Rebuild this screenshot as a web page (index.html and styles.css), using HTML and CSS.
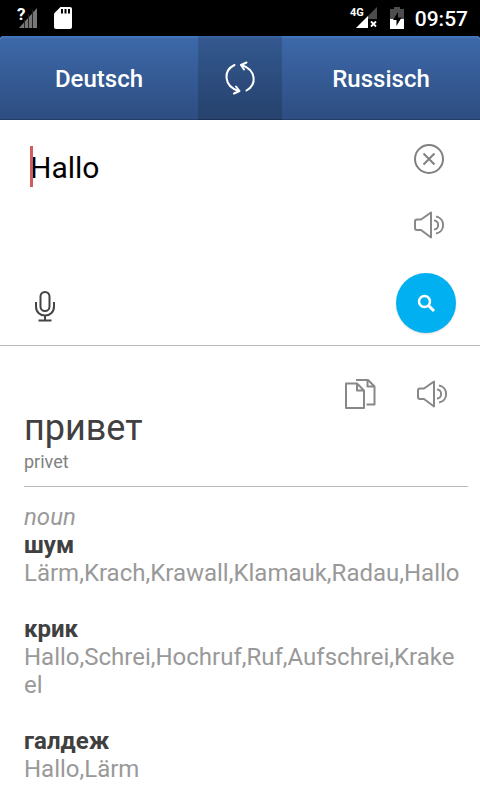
FILE: index.html
```html
<!DOCTYPE html>
<html lang="de">
  <head>
    <meta charset="UTF-8" />
    <meta name="viewport" content="width=device-width, initial-scale=1.0" />
    <title>Deutsch - Russisch</title>
    <link rel="stylesheet" href="styles.css" />
  </head>
  <body>
    <div class="status-bar">
      <div class="status-group">
        <svg class="signal-icon" width="22" height="24" viewBox="0 0 22 24">
          <path d="M2 22 L20 2 V22 Z" fill="#777" />
          <path d="M7.500 10 V22 M11.500 8 V22 M15.500 4 V22" stroke="#222" stroke-width="1" />
          <path d="M0 0 H8 V14 H0 Z" fill="#000" />
          <text class="signal-unknown" x="0" y="14">?</text>
        </svg>
        <svg width="18" height="22" viewBox="0 0 18 22">
          <path d="M6.500 0 H16 Q18 0 18 2 V20 Q18 22 16 22 H2 Q0 22 0 20 V6.500 Z" fill="#fff" />
          <path d="M8 2 V6.500 M11.500 2 V6.500 M15 2 V6.500" stroke="#000" stroke-width="2" />
        </svg>
      </div>
      <div class="status-group">
        <svg width="28" height="24" viewBox="0 0 28 24">
          <path d="M6 22 L27 1 V22 Z" fill="#4d4d4d" />
          <path d="M6 22 L18 10 V22 Z" fill="#fff" />
          <path d="M18 13 H28 V24 H18 Z" fill="#000" />
          <path d="M21 15.500 L26 20.500 M26 15.500 L21 20.500" stroke="#fff" stroke-width="1.800" />
          <text class="signal-type" x="0" y="10">4G</text>
        </svg>
        <svg class="battery-icon" width="14" height="22" viewBox="0 0 14 22">
          <path d="M4 0 H10 V2 H14 V22 H0 V2 H4 Z" fill="#4d4d4d" />
          <path d="M0 12 H14 V22 H0 Z" fill="#fff" />
          <path d="M8 5 L3 13 H6.500 V19 L11.500 10.500 H8 Z" fill="#000" />
        </svg>
        <span class="clock">09:57</span>
      </div>
    </div>

    <header class="lang-bar">
      <button class="lang-btn">Deutsch</button>
      <button class="swap-btn" aria-label="Sprachen tauschen">
        <svg width="32" height="34" viewBox="0 0 32 34" fill="none" stroke="#fff" stroke-width="2" stroke-linecap="round" stroke-linejoin="round">
          <path d="M10.500 4 C-1 9.500 -0.500 25 14.500 30" />
          <path d="M12 25.500 L15.500 30 L10 32.500" />
          <path d="M22.500 29.500 C33 23.500 32.500 9 17.500 4" />
          <path d="M22.500 1.500 L17 4 L20 8.500" />
        </svg>
      </button>
      <button class="lang-btn">Russisch</button>
    </header>

    <section class="input-panel">
      <div class="input-main">
        <span class="caret"></span>
        <textarea class="source-text" aria-label="Text eingeben" spellcheck="false">Hallo</textarea>
        <button class="icon-btn mic-btn" aria-label="Spracheingabe">
          <svg width="22" height="32" viewBox="0 0 22 32" fill="none" stroke="#444" stroke-width="2">
            <rect x="6.500" y="2" width="9" height="19" rx="4.500" />
            <path d="M2 12 V16.500 C2 28.500 20 28.500 20 16.500 V12 M11 26 V30 M4.500 30.500 H17.500" />
          </svg>
        </button>
      </div>
      <div class="input-tools">
        <button class="icon-btn" aria-label="Löschen">
          <svg width="32" height="32" viewBox="0 0 32 32" fill="none" stroke="#808080" stroke-width="2">
            <circle cx="16" cy="16" r="14" />
            <path d="M10.500 10.500 L21.500 21.500 M21.500 10.500 L10.500 21.500" />
          </svg>
        </button>
        <button class="icon-btn" aria-label="Eingabe vorlesen">
          <svg width="32" height="32" viewBox="0 0 32 32" fill="none" stroke="#888" stroke-width="2" stroke-linejoin="round">
            <path d="M8 11.500 H4 Q2 11.500 2 13.500 V20 Q2 22 4 22 H8 L18 29.500 V4.500 Z" />
            <path d="M21 12.500 C26.500 12.500 26.500 21.500 21 21.500 M23 8.500 C32.500 10 32.500 24 23 25.500" />
          </svg>
        </button>
        <button class="search-btn" aria-label="Übersetzen">
          <svg width="18" height="18" viewBox="0 0 18 18" fill="none" stroke="#fff" stroke-width="2.500">
            <circle cx="7.500" cy="7.500" r="5.500" />
            <path d="M11.500 11.500 L17 17" stroke-width="3" />
          </svg>
        </button>
      </div>
    </section>

    <main class="result">
      <div class="result-tools">
        <button class="icon-btn" aria-label="Kopieren">
          <svg width="32" height="32" viewBox="0 0 32 32" fill="none" stroke="#888" stroke-width="2" stroke-linejoin="round">
            <path d="M2 5.500 H13 L20 12.500 V30 H2 Z M13 5.500 V12.500 H20" />
            <path d="M12 2 H24 L30.500 8.500 V26.500 H22.500 M23.500 2 V8.500 H30.500" />
          </svg>
        </button>
        <button class="icon-btn" aria-label="Übersetzung vorlesen">
          <svg width="32" height="32" viewBox="0 0 32 32" fill="none" stroke="#888" stroke-width="2" stroke-linejoin="round">
            <path d="M8 10.500 H4 Q2 10.500 2 12.500 V19 Q2 21 4 21 H8 L18 28.500 V3.500 Z" />
            <path d="M21 11.500 C26.500 11.500 26.500 20.500 21 20.500 M23 7.500 C32.500 9 32.500 23 23 24.500" />
          </svg>
        </button>
      </div>
      <div class="translation">
        <h1 class="word" lang="ru">привет</h1>
        <p class="translit">privet</p>
      </div>
      <div class="entries">
        <p class="word-class">noun</p>
        <div class="entry">
          <h2 class="term" lang="ru">шум</h2>
          <p class="synonyms">Lärm,Krach,Krawall,Klamauk,Radau,Hallo</p>
        </div>
        <div class="entry">
          <h2 class="term" lang="ru">крик</h2>
          <p class="synonyms">Hallo,Schrei,Hochruf,Ruf,Aufschrei,Krakeel</p>
        </div>
        <div class="entry">
          <h2 class="term" lang="ru">галдеж</h2>
          <p class="synonyms">Hallo,Lärm</p>
        </div>
      </div>
    </main>
  </body>
</html>
```
FILE: styles.css
```css
* {
  margin: 0;
  padding: 0;
  box-sizing: border-box;
}

body {
  font-family: Roboto, "Noto Sans", sans-serif;
  background: #fff;
  color: #404040;
}

svg {
  display: block;
  overflow: visible;
}

button {
  border: none;
  background: none;
  font-family: inherit;
  cursor: pointer;
}

.status-bar {
  display: flex;
  justify-content: space-between;
  align-items: center;
  height: 36px;
  padding: 0 12px 0 17px;
  background: #000;
}

.status-group {
  display: flex;
  align-items: center;
}

.signal-icon {
  margin-right: 15px;
}

.signal-unknown {
  fill: #fff;
  font-size: 17px;
  font-weight: 700;
}

.signal-type {
  fill: #fff;
  font-size: 11px;
  font-weight: 700;
}

.battery-icon {
  margin: 0 11px 0 12px;
}

.clock {
  color: #fff;
  font-size: 21px;
  font-weight: 500;
  line-height: 24px;
  padding-top: 2px;
}

/* language bar */
.lang-bar {
  display: flex;
  height: 84px;
  background: linear-gradient(#3d69aa, #2d4d80);
  border-radius: 4px 4px 0 0;
  box-shadow: 0 -4px 0 #000, inset 0 2px 0 #4273bd, inset 0 -1px 0 #233d66;
}

.lang-btn {
  flex: 1;
  padding-top: 2px;
  color: #fff;
  font-size: 24px;
  font-weight: 500;
}

.swap-btn {
  display: flex;
  justify-content: center;
  align-items: center;
  width: 84px;
  background: rgba(0, 0, 0, 0.15);
}

/* input */
.input-panel {
  display: flex;
  height: 226px;
  border-bottom: 1px solid #bbb;
}

.input-main {
  position: relative;
  flex: 1;
  display: flex;
  flex-direction: column;
  align-items: flex-start;
  padding: 24px 0 23px 30px;
}

.source-text {
  flex: 1;
  width: 100%;
  border: none;
  outline: none;
  resize: none;
  background: transparent;
  color: #000;
  font-family: inherit;
  font-size: 30px;
  line-height: 48px;
}

.caret {
  position: absolute;
  top: 26px;
  left: 30px;
  width: 3px;
  height: 41px;
  background: #d05c5c;
}

.mic-btn {
  margin-left: 4px;
}

.input-tools {
  display: flex;
  flex-direction: column;
  justify-content: space-between;
  align-items: flex-end;
  padding: 23px 24px 12px 0;
}

.input-tools .icon-btn {
  margin-right: 11px;
}

.search-btn {
  display: flex;
  justify-content: center;
  align-items: center;
  width: 60px;
  height: 60px;
  border-radius: 50%;
  background: #00b0f0;
  box-shadow: 0 1px 2px rgba(0, 0, 0, 0.15);
}

/* result */
.result {
  padding: 32px 12px 16px 24px;
}

.result-tools {
  display: flex;
  justify-content: flex-end;
  gap: 40px;
  padding-right: 20px;
}

.translation {
  padding-bottom: 12px;
  border-bottom: 1px solid #bbb;
}

.word {
  font-size: 36px;
  font-weight: 400;
  line-height: 36px;
}

.translit {
  color: #808080;
  font-size: 18px;
  line-height: 24px;
  margin-top: 4px;
}

.entries {
  padding: 16px 4px 0 0;
  font-size: 24px;
  line-height: 28px;
}

.word-class {
  color: #999;
  font-style: italic;
}

.entry {
  margin-bottom: 28px;
}

.term {
  font-size: 24px;
  font-weight: 700;
}

.synonyms {
  color: #999;
  word-break: break-all;
}
```
